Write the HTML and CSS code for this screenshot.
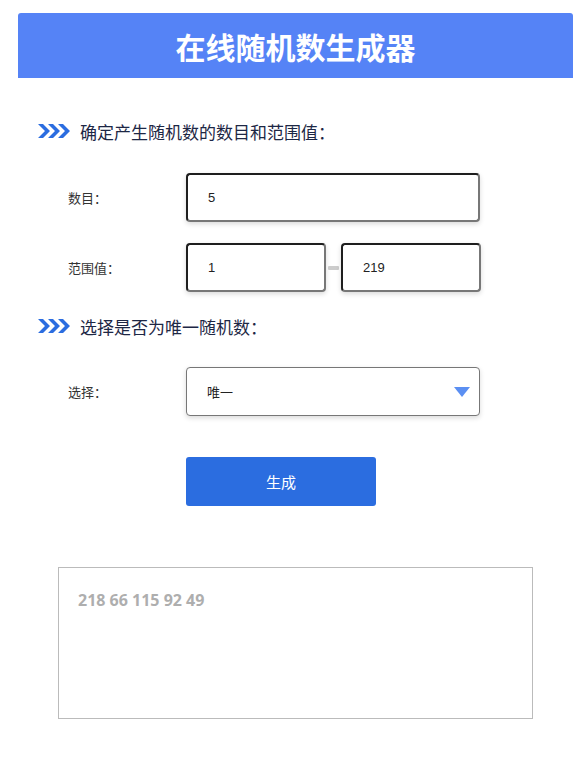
FILE: index.html
```html
<!DOCTYPE html>
<html lang="zh">
<head>
<meta charset="utf-8">
<title>在线随机数生成器</title>
<link rel="stylesheet" href="styles.css">
</head>
<body>
<div class="page">
  <header class="banner">在线随机数生成器</header>

  <h2 class="sec sec-first">
    <svg class="chev" width="32" height="14" viewBox="0 0 32 14"><path d="M0 0h5l7 7-7 7H0l7-7z M10 0h5l7 7-7 7h-5l7-7z M20 0h5l7 7-7 7h-5l7-7z" fill="#2b6de0"/></svg>
    <span>确定产生随机数的数目和范围值：</span>
  </h2>

  <div class="row">
    <label class="lbl">数目：</label>
    <div class="field wide inset">5</div>
  </div>
  <div class="row">
    <label class="lbl">范围值：</label>
    <div class="range">
      <div class="field half inset">1</div>
      <span class="dash"></span>
      <div class="field half inset">219</div>
    </div>
  </div>

  <h2 class="sec">
    <svg class="chev" width="32" height="14" viewBox="0 0 32 14"><path d="M0 0h5l7 7-7 7H0l7-7z M10 0h5l7 7-7 7h-5l7-7z M20 0h5l7 7-7 7h-5l7-7z" fill="#2b6de0"/></svg>
    <span>选择是否为唯一随机数：</span>
  </h2>

  <div class="row row-select">
    <label class="lbl">选择：</label>
    <div class="field wide select">唯一<span class="tri"></span></div>
  </div>

  <div class="btn-row"><button class="btn">生成</button></div>

  <div class="result">218 66 115 92 49</div>
</div>
</body>
</html>
```
FILE: styles.css
```css
* { box-sizing: border-box; }
body {
  margin: 0;
  background: #fff;
  font-family: "Noto Sans CJK SC", "Noto Sans", sans-serif;
  color: #222;
}
.page {
  padding: 13px 15px 0 18px;
}
.banner {
  width: 555px;
  height: 65px;
  background: #5583f6;
  border-radius: 3px 3px 0 0;
  color: #fff;
  font-size: 30px;
  font-weight: 700;
  display: flex;
  align-items: center;
  justify-content: center;
}
.sec {
  margin: 0;
  display: flex;
  align-items: center;
  gap: 10px;
  padding-left: 20px;
  font-size: 17px;
  font-weight: 400;
  color: #1d2745;
  height: 26px;
}
.sec-first { margin-top: 40px; }
.chev { display: block; }
.row {
  display: flex;
  align-items: center;
  margin-top: 20px;
}
.sec + .row { margin-top: 29px; }
.row + .row { margin-top: 21px; }
.row + .sec { margin-top: 21px; }
.lbl {
  width: 168px;
  padding-left: 50px;
  font-size: 13px;
  color: #333;
}
.field {
  height: 49px;
  display: flex;
  align-items: center;
  padding-left: 20px;
  font-family: "Liberation Sans", Arial, sans-serif;
  font-size: 13px;
  color: #222;
  background: #fff;
  border-radius: 4px;
  box-shadow: 0 2px 5px rgba(0,0,0,0.15);
}
.inset {
  border-style: solid;
  border-width: 2px;
  border-color: #1e1e1e #777 #777 #1e1e1e;
}
.wide { width: 294px; }
.half { width: 140px; }
.range { display: flex; align-items: center; }
.dash {
  width: 11px;
  height: 4px;
  margin: 0 2px;
  background: #ccc;
  border-radius: 1px;
}
.row.row-select { margin-top: 28px; }
.select {
  border: 1px solid #777;
  position: relative;
  font-family: "Noto Sans CJK SC", sans-serif;
  padding-left: 20px;
}
.tri {
  position: absolute;
  right: 9px;
  top: 19px;
  width: 0;
  height: 0;
  border-left: 8px solid transparent;
  border-right: 8px solid transparent;
  border-top: 10px solid #5b8ff2;
}
.btn-row {
  padding-left: 168px;
  margin-top: 41px;
}
.btn {
  width: 190px;
  height: 49px;
  border: none;
  border-radius: 3px;
  background: #2b6de0;
  color: #fff;
  font-family: "Noto Sans CJK SC", sans-serif;
  font-size: 15px;
  display: flex;
  align-items: center;
  justify-content: center;
  padding: 0;
}
.result {
  margin: 61px 0 0 40px;
  width: 475px;
  height: 152px;
  border: 1px solid #bbb;
  padding: 21px 19px;
  font-family: "Open Sans", sans-serif;
  font-weight: 700;
  font-size: 16px;
  color: #aeaeae;
  line-height: 22px;
}
```
